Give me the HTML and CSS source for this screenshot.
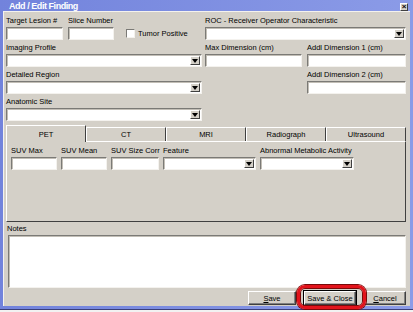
FILE: index.html
```html
<!DOCTYPE html>
<html lang="en">
<head>
    <meta charset="UTF-8">
    <title>Add / Edit Finding</title>
    <link rel="stylesheet" href="styles.css">
</head>
<body>
    <div class="window">
        <div class="titlebar">
            <span class="title">Add / Edit Finding</span>
            <span class="close">&times;</span>
        </div>

        <div class="dialog">
            <!-- Datos generales del hallazgo -->
            <div class="top-grid">
                <div class="lesion-row">
                    <div class="field lesion">
                        <label>Target Lesion #</label>
                        <div class="textbox"></div>
                    </div>
                    <div class="field slice">
                        <label>Slice Number</label>
                        <div class="textbox"></div>
                    </div>
                    <div class="check">
                        <span class="checkbox"></span>
                        <span>Tumor Positive</span>
                    </div>
                </div>
                <div class="field roc">
                    <label>ROC - Receiver Operator Characteristic</label>
                    <div class="combo"><span class="drop"></span></div>
                </div>

                <div class="field">
                    <label>Imaging Profile</label>
                    <div class="combo"><span class="drop"></span></div>
                </div>
                <div class="field">
                    <label>Max Dimension (cm)</label>
                    <div class="textbox max-dim"></div>
                </div>
                <div class="field">
                    <label>Addl Dimension 1 (cm)</label>
                    <div class="textbox"></div>
                </div>

                <div class="field">
                    <label>Detailed Region</label>
                    <div class="combo"><span class="drop"></span></div>
                </div>
                <div class="field col-3">
                    <label>Addl Dimension 2 (cm)</label>
                    <div class="textbox"></div>
                </div>

                <div class="field">
                    <label>Anatomic Site</label>
                    <div class="combo"><span class="drop"></span></div>
                </div>
            </div>

            <!-- Pestañas por modalidad -->
            <div class="tabs">
                <div class="tab active">PET</div>
                <div class="tab">CT</div>
                <div class="tab">MRI</div>
                <div class="tab">Radiograph</div>
                <div class="tab">Ultrasound</div>
            </div>
            <div class="tab-panel">
                <div class="field w-max">
                    <label>SUV Max</label>
                    <div class="textbox"></div>
                </div>
                <div class="field w-mean">
                    <label>SUV Mean</label>
                    <div class="textbox"></div>
                </div>
                <div class="field w-corr">
                    <label>SUV Size Corr</label>
                    <div class="textbox"></div>
                </div>
                <div class="field w-feature">
                    <label>Feature</label>
                    <div class="combo"><span class="drop"></span></div>
                </div>
                <div class="field w-abnormal">
                    <label>Abnormal Metabolic Activity</label>
                    <div class="combo"><span class="drop"></span></div>
                </div>
            </div>

            <div class="notes">
                <label>Notes</label>
                <div class="textarea"></div>
            </div>

            <div class="buttons">
                <button class="btn w-save" type="button"><u>S</u>ave</button>
                <button class="btn w-close default" type="button">Save &amp; Close</button>
                <button class="btn w-cancel" type="button"><u>C</u>ancel</button>
            </div>
        </div>

        <!-- Resaltado del botón -->
        <div class="highlight"></div>
    </div>
    <div class="below"></div>
</body>
</html>
```

FILE: styles.css
```css
* {
    box-sizing: border-box;
}

body {
    margin: 0;
    background-color: #ffffff;
    font-family: 'Liberation Sans', Arial, sans-serif;
    font-size: 7.5px;
    color: #000;
}

.window {
    position: relative;
    width: 413px;
    height: 309px;
    background: linear-gradient(to right, #7283dc, #8b9be7);
    display: flex;
    flex-direction: column;
}

.titlebar {
    height: 11px;
    display: flex;
    align-items: center;
    justify-content: space-between;
    padding: 0 5px 0 9px;
}

.title {
    color: #fff;
    font-weight: bold;
    font-size: 9px;
    letter-spacing: -0.45px;
}

.close {
    width: 8px;
    height: 8px;
    margin-top: 3px;
    background-color: #d4d0c8;
    border: 1px solid;
    border-color: #fff #404040 #404040 #fff;
    font-size: 8px;
    line-height: 5px;
    text-align: center;
    font-weight: bold;
}

.dialog {
    flex: 1;
    margin: 0 3px 3px 3px;
    background-color: #d4d0c8;
    box-shadow: inset 1px 1px 0 #f4f2ee;
    padding: 5px 4px 0 3px;
    display: flex;
    flex-direction: column;
}

.below {
    height: 3px;
    border-top: 1px solid #3a3f7a;
    background-color: #f2f2f2;
}

label {
    display: block;
    height: 10px;
    line-height: 10px;
    margin-bottom: 1px;
    white-space: nowrap;
}

.textbox, .combo, .textarea {
    height: 13px;
    background-color: #fff;
    border: 1px solid;
    border-color: #7b7a76 #f4f2ee #f4f2ee #7b7a76;
    box-shadow: inset 1px 1px 0 #c2beb6;
}

.combo {
    display: flex;
    justify-content: flex-end;
    padding: 1px;
}

.drop {
    width: 10px;
    background-color: #d4d0c8;
    border: 1px solid;
    border-color: #fff #404040 #404040 #fff;
    display: flex;
    align-items: center;
    justify-content: center;
}

.drop::after {
    content: "";
    border-left: 3px solid transparent;
    border-right: 3px solid transparent;
    border-top: 4px solid #000;
}

/* Rejilla superior */
.top-grid {
    display: grid;
    grid-template-columns: 196px 99px 99px;
    column-gap: 3px;
    row-gap: 3px;
}

.lesion-row {
    display: flex;
    align-items: flex-end;
}

.lesion {
    width: 57px;
    margin-right: 5px;
}

.slice {
    width: 46px;
}

.check {
    display: flex;
    align-items: center;
    height: 13px;
    margin-left: 12px;
    gap: 3px;
}

.checkbox {
    width: 9px;
    height: 9px;
    background-color: #fff;
    border: 1px solid;
    border-color: #7b7a76 #f4f2ee #f4f2ee #7b7a76;
}

.roc {
    grid-column: 2 / 4;
}

.max-dim {
    width: 97px;
}

.col-3 {
    grid-column: 3;
}

/* Pestañas */
.tabs {
    display: flex;
    margin-top: 4px;
    padding-left: 1px;
}

.tab {
    flex: 1;
    height: 14px;
    margin-top: 2px;
    border: 1px solid;
    border-bottom: none;
    border-color: #fff #404040 transparent #fff;
    text-align: center;
    line-height: 13px;
}

.tab.active {
    height: 17px;
    margin-top: 0;
    margin-bottom: -1px;
    margin-left: -1px;
    padding-top: 2px;
    position: relative;
    background-color: #d4d0c8;
}

.tab-panel {
    height: 81px;
    border: 1px solid;
    border-color: #fff #404040 #404040 #fff;
    padding: 4px 4px 0 4px;
    display: flex;
    gap: 4px;
    align-items: flex-start;
}

.w-max { width: 46px; }
.w-mean { width: 46px; }
.w-corr { width: 48px; }
.w-feature { width: 93px; }
.w-abnormal { width: 94px; }

/* Notas */
.notes {
    margin-top: 2px;
}

.notes label {
    padding-left: 1px;
}

.notes .textarea {
    height: 53px;
    margin-left: 2px;
}

/* Botones */
.buttons {
    display: flex;
    justify-content: flex-end;
    gap: 8px;
    margin-top: 3px;
}

.btn {
    height: 14px;
    padding: 0;
    font-family: 'Liberation Sans', Arial, sans-serif;
    font-size: 7.5px;
    color: #000;
    background-color: #d4d0c8;
    border: 1px solid;
    border-color: #fff #404040 #404040 #fff;
    box-shadow: inset -1px -1px 0 #808080;
}

.btn.default {
    outline: 1px solid #000;
}

.w-save { width: 48px; }
.w-close { width: 52px; }
.w-cancel { width: 42px; }

.highlight {
    position: absolute;
    left: 297px;
    top: 285px;
    width: 69px;
    height: 24px;
    border: 3px solid #e2141c;
    border-radius: 8px;
    box-shadow: 0 0 0 1px #7a0a0a, inset 0 0 0 1px #7a0a0a;
}
```
